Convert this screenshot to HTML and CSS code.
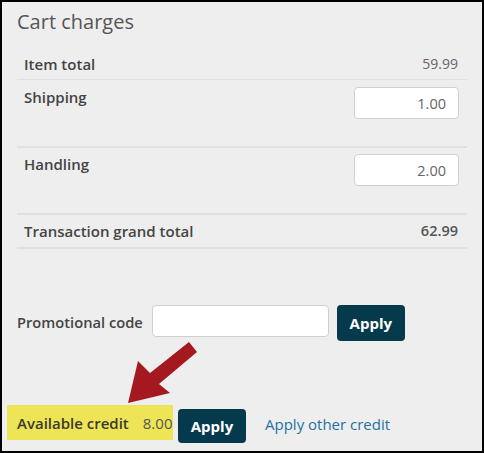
FILE: index.html
```html
<!DOCTYPE html>
<html>
<head>
<meta charset="utf-8">
<link rel="stylesheet" href="styles.css">
</head>
<body>
<div class="frame">
  <h2 class="title">Cart charges</h2>
  <div class="charges">
    <div class="row r1"><span class="label">Item total</span><span class="value">59.99</span></div>
    <div class="row tall"><span class="label">Shipping</span><input class="amt" type="text" value="1.00"></div>
    <div class="row tall r3"><span class="label">Handling</span><input class="amt" type="text" value="2.00"></div>
    <div class="row r4"><span class="label">Transaction grand total</span><span class="value strong">62.99</span></div>
  </div>
  <div class="promo">
    <span class="label">Promotional code</span>
    <input class="code" type="text">
    <button class="btn">Apply</button>
  </div>
  <div class="credit">
    <div class="highlight"><span class="label">Available credit</span><span class="cval">8.00</span></div>
    <button class="btn btn2">Apply</button>
    <a class="link" href="#">Apply other credit</a>
  </div>
  <svg class="arrow" width="484" height="453" viewBox="0 0 484 453">
    <polygon points="128,403 138,361 150,373 189,342 197,352 159,384 170,393" fill="#a3191f"/>
  </svg>
</div>
</body>
</html>
```

FILE: styles.css
```css
* { box-sizing: border-box; }
html, body { margin: 0; padding: 0; }
body {
  font-family: "Open Sans", "Noto Sans", sans-serif;
  background: #fff;
}
.frame {
  position: relative;
  width: 484px;
  height: 453px;
  border: 2px solid #000;
  background: #eeeeee;
  padding: 0 15px 0 15px;
  overflow: hidden;
}
.title {
  margin: 6px 0 0 0;
  font-size: 20px;
  line-height: 28px;
  font-weight: 400;
  color: #555;
}
.charges {
  margin-top: 12px;
  width: 450px;
}
.row {
  display: flex;
  justify-content: space-between;
  align-items: flex-start;
  padding: 6px 9px 0 7px;
  border-bottom: 2px solid #e0e0e0;
}
.r1 { height: 32px; border-bottom-width: 1px; }
.tall { height: 68px; padding-top: 7px; padding-right: 8px; }
.r3 { height: 67px; padding-top: 6px; }
.r4 { height: 34px; }
.label {
  font-size: 15px;
  line-height: 20px;
  font-weight: 600;
  color: #444;
}
.value {
  font-size: 14px;
  line-height: 20px;
  color: #666;
}
.value.strong { font-weight: 600; color: #555; font-size: 14.5px; }
.amt {
  width: 105px;
  height: 32px;
  border: 1px solid #d0d0d0;
  border-radius: 4px;
  background: #fff;
  font-family: "Open Sans", sans-serif;
  font-size: 14.5px;
  color: #666;
  text-align: right;
  padding: 0 12px 0 6px;
  margin-top: 0;
}
.promo {
  display: flex;
  align-items: flex-start;
  margin-top: 56px;
}
.promo .label { margin-top: 2px; line-height: 31px; font-size: 14.7px; }
.code {
  width: 177px;
  height: 32px;
  margin-left: 9px;
  border: 1px solid #d0d0d0;
  border-radius: 4px;
  background: #fff;
}
.btn {
  margin-left: 8px;
  width: 68px;
  height: 36px;
  border: none;
  border-radius: 4px;
  background: #053a4c;
  color: #fff;
  font-family: "Open Sans", sans-serif;
  font-weight: 700;
  font-size: 15px;
  padding: 0;
}
.credit {
  display: flex;
  align-items: flex-start;
  margin-top: 64px;
  margin-left: -10px;
}
.highlight {
  display: flex;
  align-items: center;
  height: 35px;
  width: 166px;
  background: #ede556;
  padding: 0 0 0 10px;
}
.highlight .label { color: #3a3a2a; font-weight: 600; }
.cval {
  margin-left: 14px;
  font-size: 15px;
  color: #555;
}
.btn2 {
  margin-left: 5px;
  margin-top: 4px;
  height: 34px;
}
.link {
  margin-left: 19px;
  margin-top: 9px;
  font-size: 15px;
  line-height: 20px;
  color: #1f72a2;
  text-decoration: none;
}
.arrow {
  position: absolute;
  left: -2px;
  top: -2px;
  pointer-events: none;
}
```
